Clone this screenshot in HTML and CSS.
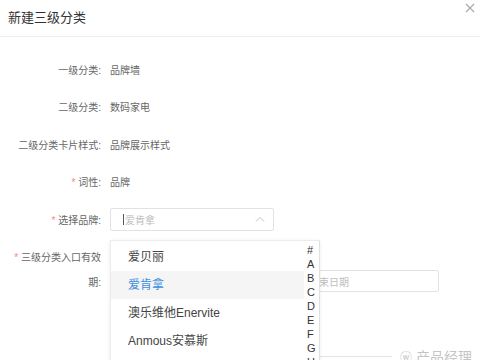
FILE: index.html
```html
<!DOCTYPE html>
<html lang="zh-CN">
<head>
    <meta charset="utf-8">
    <title>新建三级分类</title>
    <link rel="stylesheet" href="styles.css">
</head>
<body>
<div class="dialog">
    <header class="dialog-head">
        <h1>新建三级分类</h1>
        <button class="close" type="button">
            <svg width="10" height="10" viewBox="0 0 10 10"><path d="M1 1L9 9M9 1L1 9" stroke="#a8a8a8" stroke-width="1.1" fill="none"/></svg>
        </button>
    </header>

    <form class="form">
        <div class="row">
            <label>一级分类:</label>
            <span class="value">品牌墙</span>
        </div>
        <div class="row">
            <label>二级分类:</label>
            <span class="value">数码家电</span>
        </div>
        <div class="row">
            <label>二级分类卡片样式:</label>
            <span class="value">品牌展示样式</span>
        </div>
        <div class="row">
            <label><i>*</i> 词性:</label>
            <span class="value">品牌</span>
        </div>
        <div class="row">
            <label><i>*</i> 选择品牌:</label>
            <div class="select">
                <div class="select-box">
                    <span class="cursor"></span>
                    <span class="placeholder">爱肯拿</span>
                    <svg class="arrow" width="10" height="6" viewBox="0 0 10 6"><path d="M1 5.5L5 1.5L9 5.5" stroke="#c4c4c4" stroke-width="1" fill="none"/></svg>
                </div>
                <!-- 下拉列表 -->
                <div class="dropdown">
                    <ul class="options">
                        <li>爱贝丽</li>
                        <li class="active">爱肯拿</li>
                        <li>澳乐维他Enervite</li>
                        <li>Anmous安慕斯</li>
                    </ul>
                    <ul class="letters">
                        <li>#</li><li>A</li><li>B</li><li>C</li><li>D</li>
                        <li>E</li><li>F</li><li>G</li><li>H</li>
                    </ul>
                </div>
            </div>
        </div>
        <div class="row row-tall">
            <label><i>*</i> 三级分类入口有效<br>期:</label>
            <div class="range">
                <span>开始日期</span>
                <span class="sep">至</span>
                <span class="end">结束日期</span>
            </div>
        </div>
    </form>

    <div class="watermark"><span class="wm-line"></span><span class="wm-icon">ⓦ</span>产品经理</div>
</div>
</body>
</html>
```

FILE: styles.css
```css
html, body {
    margin: 0;
    padding: 0;
    background: #fff;
}

body {
    font-family: "Liberation Sans", "Noto Sans CJK SC", sans-serif;
    color: #666;
    width: 480px;
    height: 360px;
    overflow: hidden;
}

.dialog {
    position: relative;
    height: 360px;
    overflow: hidden;
}

.dialog-head {
    display: flex;
    justify-content: space-between;
    align-items: flex-start;
    height: 36px;
    border-bottom: 1px solid #ececec;
}

.dialog-head h1 {
    margin: 0;
    padding: 9px 0 0 8px;
    font-size: 13px;
    line-height: 18px;
    font-weight: normal;
    color: #333;
}

.close {
    margin: 3px 5px 0 0;
    padding: 0;
    border: 0;
    background: transparent;
    width: 10px;
    height: 10px;
    line-height: 0;
}

.form {
    padding-top: 20.5px;
}

.row {
    display: flex;
    align-items: center;
    height: 23px;
    margin-bottom: 14.5px;
    font-size: 10px;
}

.row label {
    box-sizing: border-box;
    width: 101px;
    padding-left: 12px;
    margin-right: 9px;
    text-align: right;
    color: #666;
    white-space: nowrap;
}

.row label i {
    font-style: normal;
    color: #ef8d8d;
}

.value {
    color: #666;
}

.select {
    position: relative;
}

.select-box {
    box-sizing: border-box;
    display: flex;
    align-items: center;
    width: 164px;
    height: 23px;
    border: 1px solid #e2e2e2;
    border-radius: 2px;
    padding: 0 8px 0 12px;
}

.cursor {
    width: 1px;
    height: 11px;
    background: #556;
    margin-right: 1px;
}

.placeholder {
    flex: 1;
    color: #bdbdbd;
}

.dropdown {
    position: absolute;
    top: 32px;
    left: 0;
    z-index: 2;
    display: flex;
    width: 208px;
    height: 122px;
    background: #fff;
    border: 1px solid #ececec;
    border-right-color: #e0e0e0;
    border-bottom: 0;
    box-shadow: 0 1px 4px rgba(0, 0, 0, 0.08);
    overflow: hidden;
}

.options {
    list-style: none;
    margin: 0;
    padding: 2px 0 0;
    flex: 1;
}

.options li {
    height: 28px;
    line-height: 28px;
    padding-left: 17px;
    font-size: 12px;
    color: #444;
}

.options li.active {
    background: #f5f5f5;
    color: #3d8fe0;
}

.letters {
    list-style: none;
    margin: 0;
    padding: 2px 0 0 3px;
    width: 15px;
    box-sizing: border-box;
    font-size: 11px;
    line-height: 14px;
    color: #333;
}

.row-tall {
    align-items: flex-start;
    height: auto;
}

.row-tall label {
    line-height: 25px;
    white-space: normal;
}

.range {
    box-sizing: border-box;
    display: flex;
    align-items: center;
    width: 329px;
    height: 22px;
    margin-top: 25px;
    border: 1px solid #e2e2e2;
    border-radius: 2px;
    padding-left: 12px;
    color: #bdbdbd;
}

.range .sep {
    margin: 0 12px;
    color: #999;
}

.range .end {
    margin-left: 112px;
}

.watermark {
    position: absolute;
    right: 8px;
    bottom: -6px;
    display: flex;
    align-items: center;
    font-size: 14px;
    color: #c4c4c4;
}

.wm-line {
    width: 80px;
    height: 1px;
    background: #e4e4e4;
    margin-right: 8px;
}

.wm-icon {
    margin-right: 4px;
    font-size: 12px;
}
```
